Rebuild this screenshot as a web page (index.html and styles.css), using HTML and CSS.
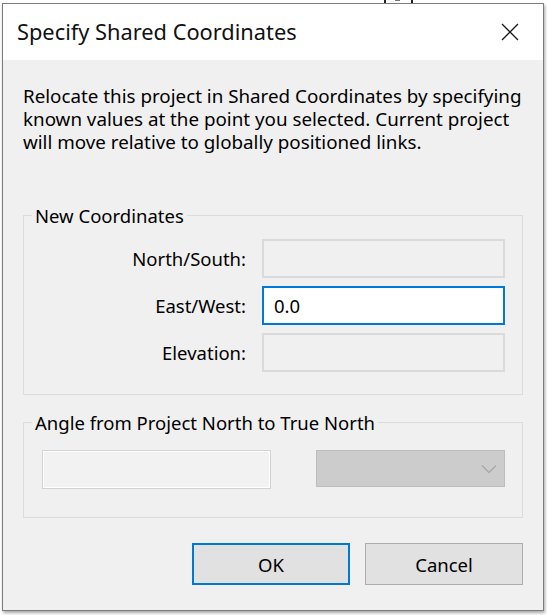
FILE: index.html
```html
<!DOCTYPE html>
<html>
<head>
<meta charset="utf-8">
<link rel="stylesheet" href="styles.css">
</head>
<body>
<div class="marks"><span class="m1"></span><span class="m2"></span><span class="m3"></span></div>
<div class="window">
  <div class="titlebar">
    <div class="title">Specify Shared Coordinates</div>
    <div class="close">
      <svg width="18" height="18" viewBox="0 0 18 18"><path d="M1 1 L17 17 M17 1 L1 17" stroke="#1a1a1a" stroke-width="1.3" fill="none"/></svg>
    </div>
  </div>
  <div class="content">
    <p class="desc">Relocate this project in Shared Coordinates by specifying known values at the point you selected. Current project will move relative to globally positioned links.</p>
    <fieldset class="group g1">
      <legend>New Coordinates</legend>
      <div class="grid">
        <div class="lbl">North/South:</div><div class="field disabled"></div>
        <div class="lbl">East/West:</div><div class="field active">0.0</div>
        <div class="lbl">Elevation:</div><div class="field disabled"></div>
      </div>
    </fieldset>
    <fieldset class="group g2">
      <legend>Angle from Project North to True North</legend>
      <div class="row2">
        <div class="field dis2"></div>
        <div class="combo">
          <svg width="16" height="10" viewBox="0 0 16 10"><path d="M1 1.5 L8 8.5 L15 1.5" stroke="#a8a8a8" stroke-width="1.3" fill="none"/></svg>
        </div>
      </div>
    </fieldset>
    <div class="buttons">
      <div class="btn default">OK</div>
      <div class="btn">Cancel</div>
    </div>
  </div>
</div>
</body>
</html>
```
FILE: styles.css
```css
html, body {
  margin: 0;
  padding: 0;
  background: #ffffff;
}
body {
  font-family: "Noto Sans", "Open Sans", sans-serif;
  color: #000;
  position: relative;
  width: 547px;
  height: 615px;
  overflow: hidden;
}
.marks span {
  position: absolute;
  top: 0;
  width: 2px;
  height: 3px;
  background: #222;
}
.marks .m1 { left: 384px; }
.marks .m2 { left: 395px; width: 5px; height: 1px; background: #777; }
.marks .m3 { left: 411px; }
.window {
  margin: 3px 0 0 2px;
  width: 540px;
  height: 606px;
  border: 1px solid #7c7c7c;
  box-shadow: 1px 2px 3px rgba(0,0,0,0.35);
  background: #f0f0f0;
  display: flex;
  flex-direction: column;
}
.titlebar {
  height: 56px;
  background: #ffffff;
  display: flex;
  align-items: center;
  justify-content: space-between;
  padding: 0 24px 0 14px;
}
.title {
  font-size: 21.8px;
  color: #111;
  padding-bottom: 2px;
}
.close {
  width: 18px;
  height: 18px;
  display: flex;
}
.content {
  flex: 1;
  padding: 25px 20px 0 20px;
  display: flex;
  flex-direction: column;
}
.desc {
  margin: 0 -10px 50px 0;
  font-size: 18.8px;
  line-height: 23px;
}
.group {
  margin: 0;
  border: 1px solid #dcdcdc;
  padding: 0;
}
.group legend {
  font-size: 18.5px;
  line-height: 23px;
  padding: 0 3px;
  margin-left: 8px;
}
.g1 {
  padding: 12px 0 22px 0;
}
.grid {
  display: grid;
  grid-template-columns: 222px 243px;
  column-gap: 16px;
  row-gap: 8px;
}
.lbl {
  text-align: right;
  font-size: 18.5px;
  height: 39px;
  line-height: 39px;
}
.field {
  height: 39px;
  box-sizing: border-box;
  font-size: 18.5px;
  line-height: 35px;
  padding: 0 10px;
}
.field.disabled {
  border: 2px solid #dadada;
  background: #f0f0f0;
}
.field.active {
  border: 2px solid #0078d7;
  background: #ffffff;
}
.g2 {
  margin-top: 16px;
  padding: 16px 0 28px 0;
}
.row2 {
  display: flex;
  align-items: flex-start;
  gap: 45px;
  padding-left: 18px;
}
.field.dis2 {
  width: 229px;
  border: 1px solid #d2d2d2;
  box-shadow: inset 0 0 0 1px #ffffff;
  background: #f2f2f2;
}
.combo {
  width: 189px;
  height: 37px;
  box-sizing: border-box;
  background: #cccccc;
  border: 1px solid #bdbdbd;
  display: flex;
  align-items: center;
  justify-content: flex-end;
  padding-right: 7px;
}
.buttons {
  margin-top: 25px;
  display: flex;
  justify-content: flex-end;
  gap: 15px;
}
.btn {
  width: 158px;
  height: 42px;
  box-sizing: border-box;
  background: #e1e1e1;
  border: 1px solid #adadad;
  display: flex;
  align-items: center;
  justify-content: center;
  font-size: 18.5px;
}
.btn.default {
  border: 2px solid #0078d7;
}
```
